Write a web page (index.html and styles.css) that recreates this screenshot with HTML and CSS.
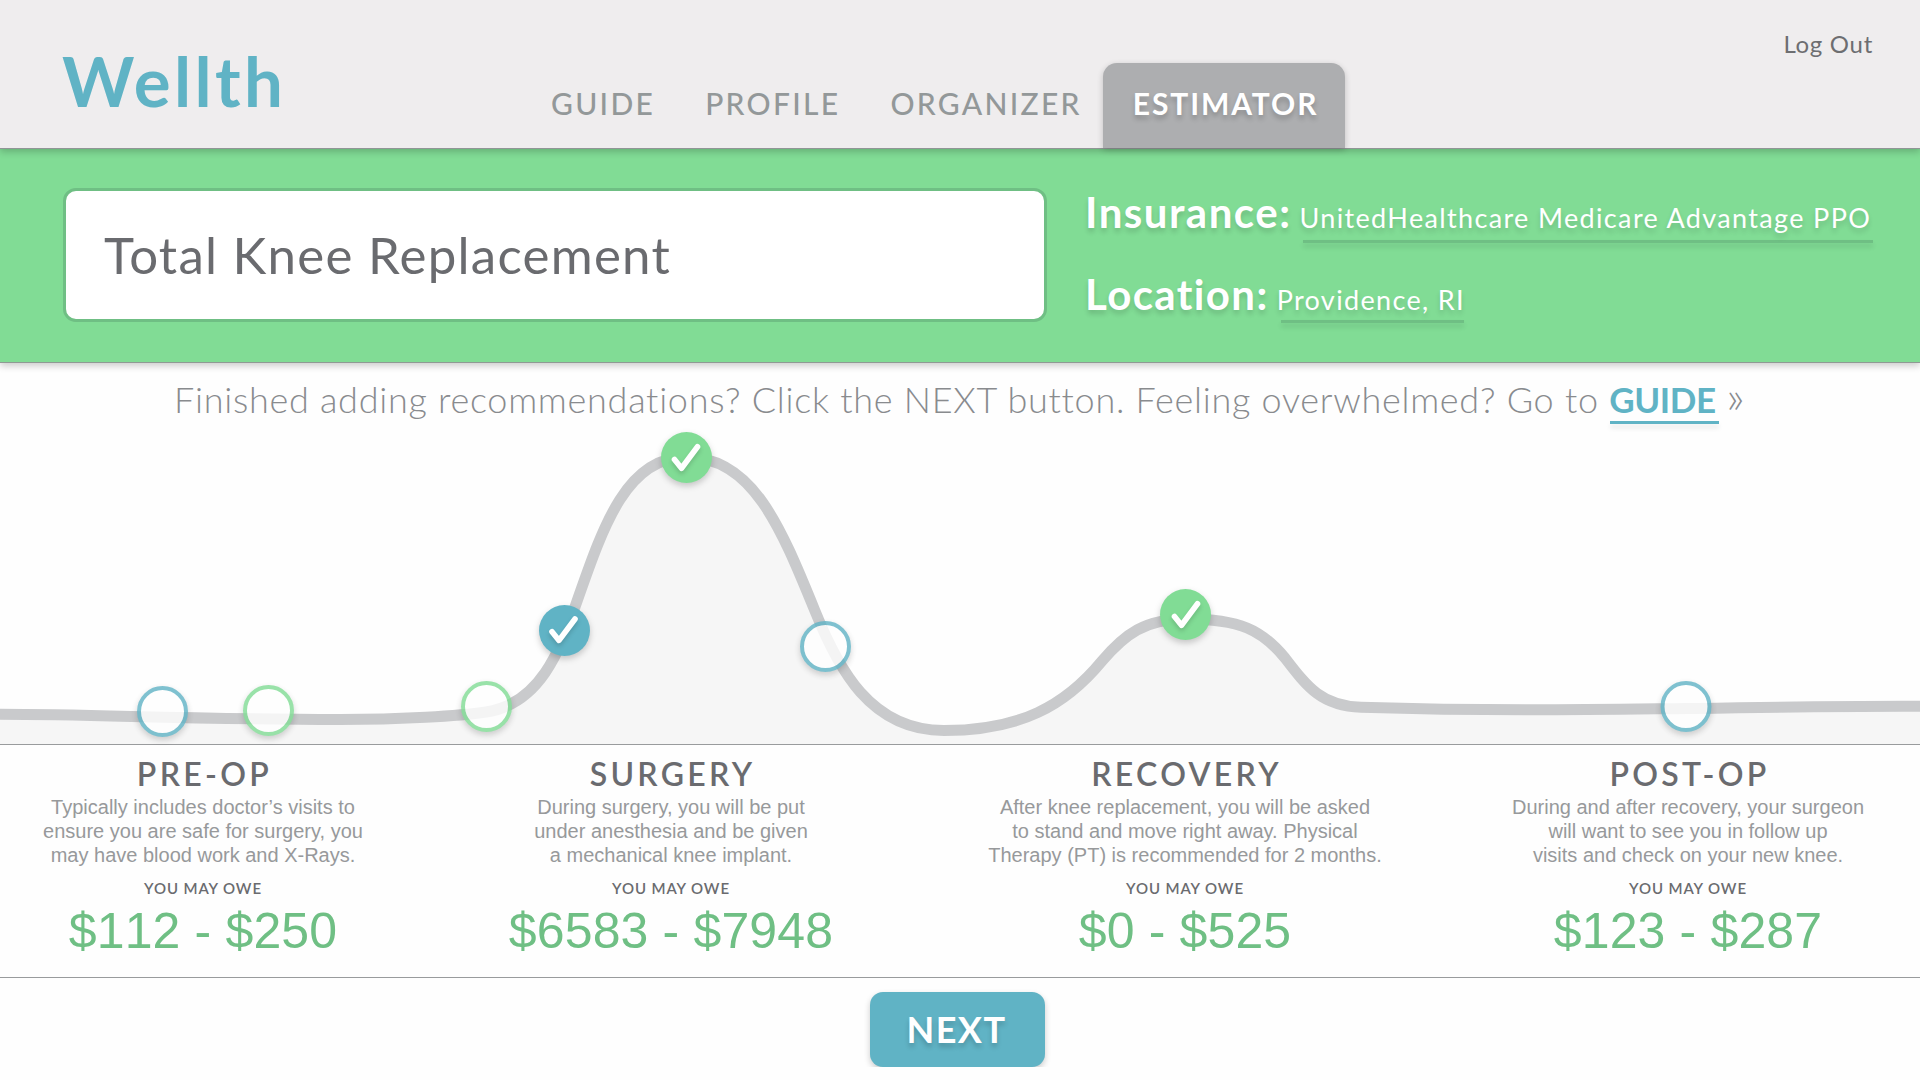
FILE: index.html
```html
<!DOCTYPE html>
<html lang="en">
<head>
  <meta charset="UTF-8" />
  <meta name="viewport" content="width=device-width, initial-scale=1.0" />
  <title>Wellth - Estimator</title>
  <link rel="stylesheet" href="styles.css">
</head>
<body>
  <header class="header">
    <a class="logo" href="#">Wellth</a>
    <nav class="nav">
      <a href="#">GUIDE</a>
      <a href="#">PROFILE</a>
      <a href="#">ORGANIZER</a>
      <a href="#" class="active">ESTIMATOR</a>
    </nav>
    <a class="logout" href="#">Log Out</a>
  </header>

  <section class="search">
    <div class="procedure">Total Knee Replacement</div>
    <div class="details">
      <div class="detail">
        <span class="label">Insurance:</span>
        <span class="value">UnitedHealthcare Medicare Advantage PPO</span>
      </div>
      <div class="detail location">
        <span class="label">Location:</span>
        <span class="value">Providence, RI</span>
      </div>
    </div>
  </section>

  <p class="message">Finished adding recommendations? Click the NEXT button. Feeling overwhelmed? Go to <a href="#">GUIDE</a> <span class="arrow">»</span></p>

  <svg class="chart" viewBox="0 430 1920 314" fill="none" xmlns="http://www.w3.org/2000/svg">
    <defs>
      <path id="check" d="M-12 2L-5 10.7L11 -10.7"/>
    </defs>
    <path class="area" d="M0 714.3C100 714.5 180 719 340 719.5C400 719.5 460 716 486 712C540 704 560 650 575 607C602 530 625 457 686 457C752 457 780 525 815 611C838 668 870 730.5 944 730.5C1020 730.5 1065 706 1102 661C1125 634 1145 619 1186 619C1240 619 1262 630 1285 658C1308 688 1322 706 1361 707.3C1500 711.5 1600 709.5 1686 708.5C1780 707 1840 706 1920 706.3V744H0Z"/>
    <path class="curve" d="M-10 714.3H0C100 714.5 180 719 340 719.5C400 719.5 460 716 486 712C540 704 560 650 575 607C602 530 625 457 686 457C752 457 780 525 815 611C838 668 870 730.5 944 730.5C1020 730.5 1065 706 1102 661C1125 634 1145 619 1186 619C1240 619 1262 630 1285 658C1308 688 1322 706 1361 707.3C1500 711.5 1600 709.5 1686 708.5C1780 707 1840 706 1920 706.3H1930"/>

    <!-- steps still open -->
    <circle class="step blue" cx="162.5" cy="711.5" r="23.5"/>
    <circle class="step green" cx="268.5" cy="710.5" r="23.5"/>
    <circle class="step green" cx="486.5" cy="706.5" r="23.5"/>
    <circle class="step blue" cx="825.5" cy="646.5" r="23.5"/>
    <circle class="step blue" cx="1686" cy="706.5" r="23.5"/>

    <!-- steps already added -->
    <g class="done blue" transform="translate(564.5 630.5)">
      <circle r="25.5"/>
      <use href="#check" x="-0.5" y="-0.8"/>
    </g>
    <g class="done green" transform="translate(686.5 457.5)">
      <circle r="25.5"/>
      <use href="#check"/>
    </g>
    <g class="done green" transform="translate(1185.5 614.5)">
      <circle r="25.5"/>
      <use href="#check" x="1"/>
    </g>
  </svg>

  <section class="phases">
    <div class="phase">
      <h2>PRE-OP</h2>
      <p>Typically includes doctor’s visits to<br>ensure you are safe for surgery, you<br>may have blood work and X-Rays.</p>
      <h3>YOU MAY OWE</h3>
      <div class="amount">$112 - $250</div>
    </div>
    <div class="phase">
      <h2>SURGERY</h2>
      <p>During surgery, you will be put<br>under anesthesia and be given<br>a mechanical knee implant.</p>
      <h3>YOU MAY OWE</h3>
      <div class="amount">$6583 - $7948</div>
    </div>
    <div class="phase">
      <h2>RECOVERY</h2>
      <p>After knee replacement, you will be asked<br>to stand and move right away. Physical<br>Therapy (PT) is recommended for 2 months.</p>
      <h3>YOU MAY OWE</h3>
      <div class="amount">$0 - $525</div>
    </div>
    <div class="phase">
      <h2>POST-OP</h2>
      <p>During and after recovery, your surgeon<br>will want to see you in follow up<br>visits and check on your new knee.</p>
      <h3>YOU MAY OWE</h3>
      <div class="amount">$123 - $287</div>
    </div>
  </section>

  <footer class="footer">
    <button class="next" type="button">NEXT</button>
  </footer>
</body>
</html>
```
FILE: styles.css
```css
*,
*::before,
*::after {
  box-sizing: border-box;
}

body {
  margin: 0;
  background: #fefefe;
  font-family: Lato, sans-serif;
  overflow: hidden;
}

a {
  text-decoration: none;
}

h2, h3, p {
  margin: 0;
}

/* header */
.header {
  position: relative;
  z-index: 1;
  display: flex;
  height: 149px;
  padding: 0 47px 0 62px;
  background: #efedee;
  border-bottom: 1px solid #919596;
  box-shadow: 0 3px 7px rgba(0, 0, 0, 0.2);
}

.logo {
  width: 489px;
  font-size: 69px;
  font-weight: 700;
  line-height: 161px;
  letter-spacing: 3.4px;
  color: #60b3c5;
}

.nav {
  display: flex;
  align-items: flex-end;
  gap: 50px;
}

.nav a {
  height: 85px;
  font-size: 30px;
  font-weight: 500;
  line-height: 81px;
  letter-spacing: 2.3px;
  color: #939899;
}

.nav .active {
  width: 242px;
  margin-left: -29px;
  padding-left: 30px;
  background: #adaeb0;
  border-radius: 14px 14px 0 0;
  box-shadow: 0 2px 6px rgba(0, 0, 0, 0.2);
  font-weight: 700;
  letter-spacing: 1.9px;
  color: #fff;
  text-shadow: 0 4px 5px rgba(0, 0, 0, 0.2);
}

.logout {
  margin-left: auto;
  font-size: 24px;
  line-height: 87px;
  letter-spacing: 0.7px;
  color: #6d6e71;
}

/* procedure, insurance and location */
.search {
  display: flex;
  gap: 38px;
  height: 214px;
  padding: 39px 0 0 63px;
  background: #81dc95;
  border-bottom: 1px solid #8f9a94;
  box-shadow: 0 3px 7px rgba(0, 0, 0, 0.2);
}

.procedure {
  width: 984px;
  height: 134px;
  padding-left: 38px;
  background: #fff;
  border: 3px solid #6fbf84;
  border-radius: 13px;
  font-size: 51px;
  line-height: 127px;
  letter-spacing: 1.25px;
  color: #6a6b6f;
}

.detail {
  display: flex;
  align-items: baseline;
  gap: 8px;
  height: 82px;
  color: #fff;
  white-space: nowrap;
  text-shadow: 0 4px 5px rgba(0, 0, 0, 0.15);
}

.label {
  font-size: 42px;
  font-weight: 700;
  line-height: 48px;
  letter-spacing: 1.5px;
}

.value {
  font-size: 27px;
  line-height: 32px;
  letter-spacing: 1.35px;
}

.value::after {
  content: "";
  display: block;
  height: 3px;
  margin: 6px -2px 0 4px;
  background: #6fbf84;
  box-shadow: 0 4px 5px rgba(0, 0, 0, 0.12);
}

.location .label {
  letter-spacing: 1.4px;
}

.location .value::after {
  margin: 4px 1px 0 4px;
}

/* message */
.message {
  height: 67px;
  padding: 6px 0 0 174px;
  font-size: 36px;
  font-weight: 300;
  line-height: 60px;
  letter-spacing: 0.72px;
  white-space: nowrap;
  color: #898b8e;
}

.message a {
  display: inline-block;
  font-size: 35px;
  font-weight: 700;
  line-height: 42px;
  letter-spacing: -0.4px;
  color: #60b3c5;
}

.message a::after {
  content: "";
  display: block;
  height: 3px;
  margin: 1px -3px 0 1px;
  background: #60b3c5;
  box-shadow: 0 4px 5px rgba(0, 0, 0, 0.1);
}

.arrow {
  font-size: 46px;
  line-height: 42px;
}

/* recovery chart */
.chart {
  display: block;
  width: 1920px;
  height: 314px;
  overflow: visible;
}

.area {
  fill: #f6f6f6;
}

.curve {
  stroke: #c9cacc;
  stroke-width: 11;
}

.step {
  fill: #fff;
  stroke-width: 4;
  opacity: 0.8;
  filter: drop-shadow(0 3px 3px rgba(0, 0, 0, 0.22));
}

.step.blue {
  stroke: #60b3c5;
}

.step.green {
  stroke: #81dc95;
}

.done {
  filter: drop-shadow(0 3px 3px rgba(0, 0, 0, 0.2));
}

.done.blue {
  fill: #60b3c5;
}

.done.green {
  fill: #81dc95;
}

.done use {
  fill: none;
  stroke: #fff;
  stroke-width: 5.6;
  stroke-linecap: round;
  stroke-linejoin: round;
  filter: drop-shadow(0 3px 2px rgba(0, 0, 0, 0.15));
}

/* phases */
.phases {
  display: grid;
  grid-template-columns: 406px 530px 498px 486px;
  height: 234px;
  padding-top: 10px;
  border-top: 1px solid #999b9d;
  border-bottom: 1px solid #999b9d;
  text-align: center;
  white-space: nowrap;
}

.phase:last-child {
  padding-left: 22px;
}

.phase h2 {
  padding-left: 3px;
  font-size: 32px;
  font-weight: 600;
  line-height: 38px;
  letter-spacing: 3.3px;
  color: #6a6b6f;
}

.phase p {
  margin-top: 2px;
  font-family: "Liberation Sans", Arial, sans-serif;
  font-size: 20px;
  line-height: 24px;
  color: #97999b;
}

.phase h3 {
  margin-top: 12px;
  font-size: 15px;
  font-weight: 600;
  line-height: 18px;
  letter-spacing: 0.9px;
  color: #6a6b6f;
}

.amount {
  margin-top: 4px;
  font-family: "Liberation Sans", Arial, sans-serif;
  font-size: 50px;
  font-kerning: none;
  line-height: 60px;
  letter-spacing: 0.15px;
  color: #6fbf84;
}

/* footer */
.footer {
  padding: 14px 5px 0 0;
  text-align: center;
}

.next {
  width: 175px;
  height: 75px;
  padding: 0 2px 0 0;
  border: 0;
  border-radius: 13px;
  background: #60b3c5;
  box-shadow: 0 3px 6px rgba(0, 0, 0, 0.2);
  font-family: inherit;
  font-size: 36px;
  font-weight: 700;
  line-height: 75px;
  letter-spacing: 1.5px;
  color: #fff;
  text-shadow: 0 4px 5px rgba(0, 0, 0, 0.18);
}
```
